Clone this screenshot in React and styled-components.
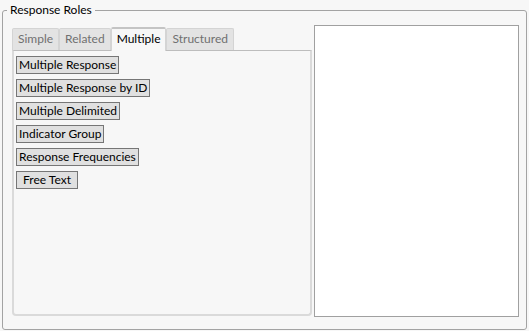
import React from "react";
import styled, { createGlobalStyle } from "styled-components";

const Global = createGlobalStyle`
  html, body { margin: 0; padding: 0; background: #f7f7f7; }
  body { font-family: Lato, "Open Sans", sans-serif; font-size: 12px; color: #000; }
`;

const Page = styled.div`
  padding: 2px 0 0 2px;
  width: 525px;
`;

const Group = styled.fieldset`
  margin: 0;
  border: 1px solid #a3a3a3;
  border-radius: 3px;
  padding: 7px 7px 12px 9px;
  display: flex;
  gap: 2px;
  min-width: 0;
`;

const Legend = styled.legend`
  margin-left: -5px;
  padding: 0 3px;
  font-size: 12px;
  line-height: 16px;
  color: #000;
`;

const Left = styled.div`
  display: flex;
  flex-direction: column;
  width: 300px;
  padding-top: 1px;
`;

const TabBar = styled.div`
  display: flex;
  align-items: flex-end;
  height: 24px;
`;

const Tab = styled.div`
  box-sizing: border-box;
  height: ${(p) => (p.$active ? "24px" : "22px")};
  padding: 0 5px;
  line-height: 20px;
  font-size: 12px;
  color: ${(p) => (p.$active ? "#000" : "#707070")};
  background: ${(p) => (p.$active ? "#f7f7f7" : "#e3e3e3")};
  border: 1px solid #d4d4d4;
  border-top: ${(p) => (p.$active ? "2px solid #c4c4c4" : "1px solid #d4d4d4")};
  border-bottom: none;
  border-radius: 2px 2px 0 0;
  margin-bottom: ${(p) => (p.$active ? "-1px" : "0")};
  position: relative;
  z-index: ${(p) => (p.$active ? 1 : 0)};
`;

const Panel = styled.div`
  box-sizing: border-box;
  height: 266px;
  border: 2px solid #dadada;
  border-top: 1px solid #bdbdbd;
  border-radius: 0 0 4px 4px;
  padding: 5px 2px;
  display: flex;
  flex-direction: column;
  align-items: flex-start;
  gap: 5px;
`;

const RoleButton = styled.div`
  box-sizing: border-box;
  height: 18px;
  line-height: 16px;
  padding: 0 ${(p) => (p.$wide ? "6px" : "2px")};
  background: #e0e0e0;
  border: 1px solid #767676;
  font-size: 12px;
  color: #000;
  white-space: nowrap;
`;

const ListBox = styled.div`
  box-sizing: border-box;
  width: 205px;
  height: 292px;
  background: #fff;
  border: 1px solid #a0a0a0;
`;

const tabs = ["Simple", "Related", "Multiple", "Structured"];
const roles = [
  "Multiple Response",
  "Multiple Response by ID",
  "Multiple Delimited",
  "Indicator Group",
  "Response Frequencies",
];

export default function App() {
  return (
    <Page>
      <Global />
      <Group>
        <Legend>Response Roles</Legend>
        <Left>
          <TabBar>
            {tabs.map((t) => (
              <Tab key={t} $active={t === "Multiple"}>{t}</Tab>
            ))}
          </TabBar>
          <Panel>
            {roles.map((r) => (
              <RoleButton key={r}>{r}</RoleButton>
            ))}
            <RoleButton $wide>Free Text</RoleButton>
          </Panel>
        </Left>
        <ListBox />
      </Group>
    </Page>
  );
}
